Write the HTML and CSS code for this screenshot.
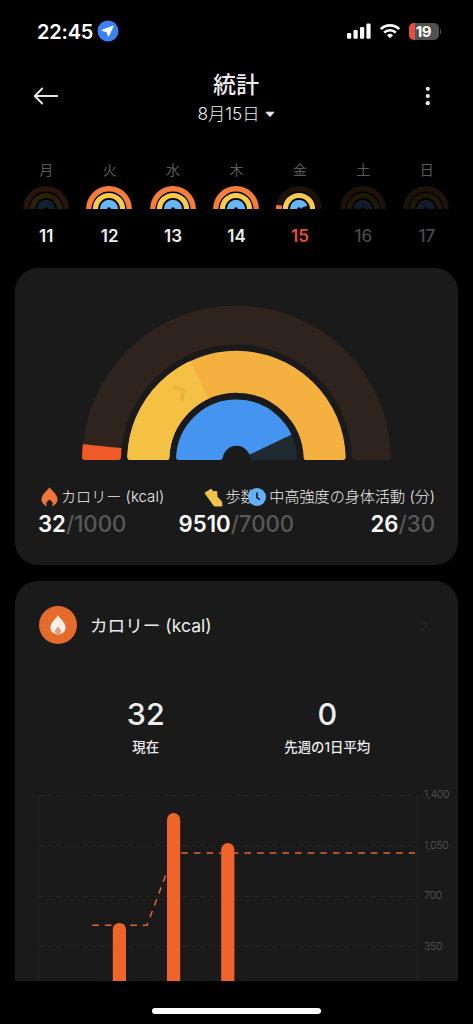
FILE: index.html
```html
<!DOCTYPE html>
<html lang="ja">
<head>
<meta charset="utf-8">
<title>統計</title>
<link rel="stylesheet" href="styles.css">
</head>
<body>
<svg class="defs" width="0" height="0">
  <defs>
    <g id="rainbow" fill="none">
      <path class="r-outer" d="M2.8 24a20.2 20.2 0 0 1 40.400 0" stroke-width="5.400"/>
      <path class="r-mid" d="M9.500 24a13.500 13.500 0 0 1 27 0" stroke-width="5.200"/>
      <path class="r-inner" d="M17.500 24a5.500 5.500 0 0 1 11 0" stroke-width="7.400"/>
    </g>
  </defs>
</svg>
<div class="screen">
  <div class="status">
    <span class="time">22:45</span>
    <svg class="loc" width="22" height="22" viewBox="0 0 22 22"><circle cx="11" cy="11" r="10.500" fill="#3b82f6"/><path d="M16 6.200 11.400 16 10.200 11.900 5.300 10.200Z" fill="#fff" stroke="#fff" stroke-width="1.200" stroke-linejoin="round"/></svg>
    <svg class="signal" width="24" height="16" viewBox="0 0 24 16" fill="#fff"><rect x="0" y="10" width="4.200" height="5.700" rx="1.200"/><rect x="6.500" y="7" width="4.200" height="8.700" rx="1.200"/><rect x="13" y="4" width="4.200" height="11.700" rx="1.200"/><rect x="19.400" y="0.600" width="4.200" height="15.100" rx="1.200"/></svg>
    <svg class="wifi" width="20" height="16" viewBox="0 0 20 16" fill="none" stroke="#fff" stroke-width="2.700"><path d="M.9 6.100a13 13 0 0 1 18.200 0M4.200 9.600a8.300 8.300 0 0 1 11.600 0"/><path d="M10 15.300 7 12.200a4.300 4.300 0 0 1 6 0Z" fill="#fff" stroke="none"/></svg>
    <span class="battery"><b>19</b></span><i class="nub"></i>
  </div>
  <header class="head">
    <svg class="back" width="26" height="20" viewBox="0 0 26 20" fill="none" stroke="#e8e8e8" stroke-width="1.900" stroke-linecap="round" stroke-linejoin="round"><path d="M24.300 10H2M9.200 2.500 1.800 10l7.400 7.500"/></svg>
    <div class="heading">
      <h1>統計</h1>
      <div class="date"><span>8月15日</span><svg width="10" height="7" viewBox="0 0 10 7"><path d="M1 1.200h8L5 5.600Z" fill="#eee" stroke="#eee" stroke-linejoin="round"/></svg></div>
    </div>
    <svg class="more" width="26" height="20" viewBox="0 0 26 20" fill="#e8e8e8"><circle cx="18.800" cy="2.800" r="2.100"/><circle cx="18.800" cy="10" r="2.100"/><circle cx="18.800" cy="17.200" r="2.100"/></svg>
  </header>
  <nav class="week">
    <div class="day past"><span class="wd">月</span><svg class="bow" width="46" height="24"><use href="#rainbow"/></svg><span class="num">11</span></div>
    <div class="day"><span class="wd">火</span><svg class="bow" width="46" height="24"><use href="#rainbow"/></svg><span class="num">12</span></div>
    <div class="day"><span class="wd">水</span><svg class="bow" width="46" height="24"><use href="#rainbow"/></svg><span class="num">13</span></div>
    <div class="day"><span class="wd">木</span><svg class="bow" width="46" height="24"><use href="#rainbow"/></svg><span class="num">14</span></div>
    <div class="day today"><span class="wd">金</span><svg class="bow" width="46" height="24"><use href="#rainbow"/><path d="M.3 20 6 20.500V24H0Z" fill="#f1763b"/><path d="m25 23 8-3 .5 4h-8Z" fill="#06101a"/></svg><span class="num">15</span></div>
    <div class="day future"><span class="wd">土</span><svg class="bow" width="46" height="24"><use href="#rainbow"/></svg><span class="num">16</span></div>
    <div class="day future"><span class="wd">日</span><svg class="bow" width="46" height="24"><use href="#rainbow"/></svg><span class="num">17</span></div>
  </nav>
  <section class="card summary">
    <svg class="gauge" width="311" height="156" viewBox="81 305 311 156" stroke-linejoin="round" stroke-width="6">
      <defs>
        <path id="g1" d="M85.030 457A151.500 151.500 0 0 1 387.970 457H354.960A118.500 118.500 0 0 0 118.040 457Z"/>
        <path id="g2" d="M130.342 457A106.200 106.200 0 0 1 342.658 457H306.636A70.200 70.200 0 0 0 166.364 457Z"/>
        <path id="g3" d="M179.080 457A57.500 57.500 0 0 1 293.920 457H253.260A17 17 0 0 0 219.740 457Z"/>
        <clipPath id="c1"><path d="M236.500 460 62 442V470H236Z"/></clipPath>
        <clipPath id="c2"><path d="M236.500 460 185 348.900 100 340V470H236.500Z"/></clipPath>
        <clipPath id="c3"><path d="M236.500 460.800 310 425.800V380H160V470H236.500Z"/></clipPath>
      </defs>
      <use href="#g1" fill="#2e241d" stroke="#2e241d"/>
      <g clip-path="url(#c1)"><use href="#g1" fill="#ef5a29" stroke="#ef5a29"/></g>
      <use href="#g2" fill="#f4b13f" stroke="#f4b13f"/>
      <g clip-path="url(#c2)"><use href="#g2" fill="#f5c145" stroke="#f5c145"/></g>
      <path d="M173.500 387.300 184.300 390.200 181.300 400.800" fill="none" stroke="#efb03e" stroke-width="3.600"/>
      <use href="#g3" fill="#1f2a31" stroke="#1f2a31"/>
      <g clip-path="url(#c3)"><use href="#g3" fill="#4494f0" stroke="#4494f0"/></g>
    </svg>
    <div class="metrics">
      <div class="metric kcal">
        <div class="label"><svg width="17" height="20" viewBox="0 0 17 20"><path d="M8.500.8C6.500 3.500.8 7.800.8 12.300c0 3.200 1.800 5.600 5 6.600-.8-1-1-2-.7-3.100.4-1.400 2-2.300 3.400-3.600 1.400 1.300 3 2.200 3.400 3.600.3 1.100.1 2.100-.7 3.100 3.200-1 5-3.400 5-6.600C16.200 7.800 10.500 3.500 8.500.8Z" fill="#f1763b" stroke="#f1763b" stroke-width=".6"/></svg><span>カロリー (kcal)</span></div>
        <div class="value"><b>32</b>/1000</div>
      </div>
      <div class="metric steps">
        <div class="label"><svg width="19" height="19" viewBox="0 0 19 19"><path d="M1 5 7 1.200l2.200 2.600 3.500-.4.300 5.200 4.600 5.400.3 4H10.300Z" fill="#f3c24b" stroke="#f3c24b" stroke-linejoin="round"/></svg><span>歩数</span></div>
        <div class="value"><b>9510</b>/7000</div>
      </div>
      <div class="metric active">
        <div class="label"><svg width="18" height="18" viewBox="0 0 18 18"><circle cx="9" cy="9" r="9" fill="#65b1f7"/><path d="M9 4.500v5l2.800 2.300" fill="none" stroke="#15222e" stroke-width="1.700"/></svg><span>中高強度の身体活動 (分)</span></div>
        <div class="value"><b>26</b>/30</div>
      </div>
    </div>
  </section>
  <section class="card detail">
    <div class="title">
      <span class="badge"><svg width="16" height="20" viewBox="0 0 16 20"><path d="M8 .6C6.500 3.200.4 7.500.4 12.600c0 4 3.200 6.800 7.600 6.800s7.600-2.800 7.600-6.800C15.600 7.500 9.500 3.200 8 .6Z" fill="#fbefe6"/><path d="M8 11.500c-1 1.200-3 2.700-3 4.700 0 1.600 1.200 2.900 3 2.900s3-1.300 3-2.900c0-2-2-3.500-3-4.700Z" fill="#dba27c"/></svg></span>
      <h2>カロリー (kcal)</h2>
      <svg class="chev" width="8" height="14" viewBox="0 0 8 14" fill="none" stroke="#222" stroke-width="1.800"><path d="m1 1 6 6-6 6"/></svg>
    </div>
    <div class="stats">
      <div><strong>32</strong><span>現在</span></div>
      <div><strong>0</strong><span>先週の1日平均</span></div>
    </div>
    <div class="chart">
      <svg width="403" height="195" viewBox="15 786 403 195">
        <g stroke="#232323" stroke-dasharray="5 4"><path d="M38 795.500H418M38 845.500H418M38 896.500H418M38 946.500H418"/></g>
        <path d="M38.500 795V981M417.500 795V981" stroke="#212121"/>
        <path d="M92.300 925.200H147L174 853H415" fill="none" stroke="#e2672f" stroke-width="1.500" stroke-dasharray="6.600 6.040"/>
        <g fill="#ee642a"><path d="M112.800 981V929.500a6.600 6.600 0 0 1 13.200 0V981Z"/><path d="M167 981V819.700a6.600 6.600 0 0 1 13.200 0V981Z"/><path d="M221.200 981V849.700a6.600 6.600 0 0 1 13.200 0V981Z"/></g>
      </svg>
      <div class="axis"><span>1,400</span><span>1,050</span><span>700</span><span>350</span></div>
    </div>
  </section>
  <footer class="home"><i></i></footer>
</div>
</body>
</html>
```
FILE: styles.css
```css
* { box-sizing: border-box; }
body { margin: 0; background: #000; color: #ededed; font-family: Inter, "Noto Sans CJK JP", sans-serif; }
svg { display: block; flex: none; }
.defs { height: 0; }
.screen { width: 473px; height: 1024px; display: flex; flex-direction: column; overflow: hidden; }

.status { height: 62px; padding: 0 32px 0 37px; display: flex; align-items: center; white-space: nowrap; }
.time { width: 57px; padding-top: 2px; font-size: 20px; line-height: 24px; font-weight: 600; color: #fff; letter-spacing: -.2px; }
.loc { margin-left: 3px; }
.signal { margin-left: auto; }
.wifi { margin: 0 9px 0 9px; }
.battery { width: 30px; height: 17px; border-radius: 5px; background: linear-gradient(90deg, #eb4d3d 6px, #515151 6px); color: #fff; display: flex; justify-content: center; align-items: center; }
.battery b { font-size: 15px; font-weight: 700; letter-spacing: -.3px; }
.nub { width: 1.500px; height: 5px; margin-left: 1px; border-radius: 0 2px 2px 0; background: #515151; }

.head { height: 96px; padding: 9px 34px 0 33px; display: grid; grid-template-columns: 26px 1fr 34px; }
.back { margin-top: 15px; }
.heading { display: flex; flex-direction: column; align-items: center; padding-left: 8px; }
h1 { margin: 0; font-size: 23px; line-height: 28px; font-weight: 500; }
.date { display: flex; align-items: center; gap: 5px; font-size: 17.300px; line-height: 30px; font-weight: 300; }
.more { margin-top: 15px; justify-self: center; }

.week { height: 110px; margin: 0 15px 0 14px; display: grid; grid-template-columns: repeat(7, 1fr); }
.day { display: flex; flex-direction: column; align-items: center; }
.wd { height: 27px; padding-left: 1px; font-size: 14px; line-height: 24px; color: #5a5a5a; }
.bow { --o: #f47c3c; --m: #f9cb4d; --i: #69b5fa; }
.r-outer { stroke: var(--o); }
.r-mid { stroke: var(--m); }
.r-inner { stroke: var(--i); }
.past .bow { --o: #26150d; --m: #2a2108; --i: #11222f; }
.future .bow { --o: #1d120b; --m: #1d1707; --i: #111c28; }
.today .bow { --o: #1d110a; }
.num { margin-top: 16px; padding-left: 1px; font-size: 17px; line-height: 22px; font-weight: 600; }
.today .num { color: #e8502d; }
.future .num { color: #4a4a4a; font-weight: 500; }

.card { margin: 0 15px; background: #1a1a1a; }
.summary { height: 297px; border-radius: 23px; padding-top: 37px; }
.gauge { margin: 0 auto; }
.metrics { display: flex; justify-content: space-between; padding: 24px 23px 0; white-space: nowrap; }
.metric { width: 116px; display: flex; flex-direction: column; }
.label { height: 24px; display: flex; align-items: center; gap: 3px; font-size: 15.100px; line-height: 24px; font-weight: 300; }
.value { margin-top: 1px; font-size: 22.200px; line-height: 28px; color: #585858; font-weight: 500; }
.value b { color: #fafafa; font-weight: 600; }
.kcal .label { padding-left: 3px; }
.steps .label { padding-left: 25px; }
.active { align-items: flex-end; }
.active .label { justify-content: flex-end; }

.detail { height: 400px; margin-top: 16px; border-radius: 23px 23px 0 0; display: flex; flex-direction: column; }
.title { height: 87px; padding: 0 30px 0 24px; display: flex; align-items: center; }
.badge { width: 38px; height: 38px; border-radius: 50%; background: #e56b2c; display: flex; align-items: center; justify-content: center; }
h2 { margin: 0 auto 0 13px; padding-top: 2px; font-size: 17.600px; font-weight: 400; line-height: 26px; }
.stats { height: 118px; padding: 30px 40px 0; display: grid; grid-template-columns: 1fr 1fr; text-align: center; }
.stats strong { display: block; font-size: 30.500px; line-height: 32px; font-weight: 500; }
.stats span { display: block; margin-top: 7px; font-size: 13.400px; line-height: 20px; font-weight: 500; }
.chart { display: flex; height: 195px; overflow: hidden; }
.axis { padding: 2px 0 0 6px; font-size: 10.500px; line-height: 14px; color: #585858; font-weight: 300; letter-spacing: -.3px; display: flex; flex-direction: column; gap: 36.600px; }
.home { height: 43px; display: flex; justify-content: center; padding-top: 27px; }
.home i { width: 169px; height: 6px; border-radius: 3px; background: #fff; }
```
